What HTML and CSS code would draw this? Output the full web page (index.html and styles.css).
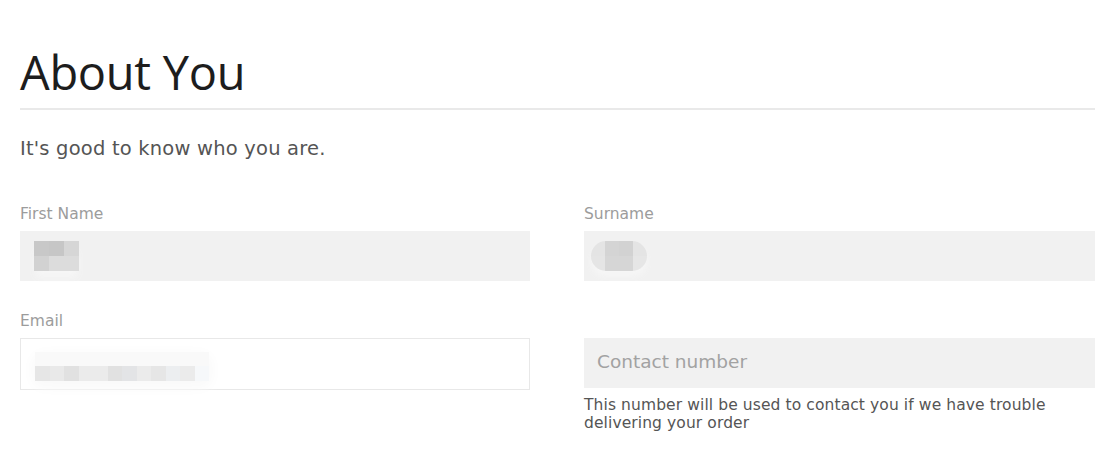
FILE: index.html
```html
<!DOCTYPE html>
<html lang="en">
<head>
<meta charset="utf-8">
<title>About You</title>
<link rel="stylesheet" href="styles.css">
</head>
<body>
<main class="page">
  <h1 class="title">About You</h1>
  <p class="intro">It's good to know who you are.</p>
  <div class="form-grid">
    <div class="field">
      <label class="label">First Name</label>
      <div class="input filled">
        <div class="blur blur-first">
          <span class="px a1"></span><span class="px a2"></span><span class="px a3"></span>
          <span class="px a4"></span><span class="px a5"></span><span class="px a6"></span>
        </div>
      </div>
    </div>
    <div class="field">
      <label class="label">Surname</label>
      <div class="input filled">
        <div class="blur blur-sur">
          <span class="px b1"></span><span class="px b2"></span><span class="px b3"></span><span class="px b4"></span>
          <span class="px b5"></span><span class="px b6"></span><span class="px b7"></span><span class="px b8"></span>
        </div>
      </div>
    </div>
    <div class="field">
      <label class="label">Email</label>
      <div class="input outlined">
        <div class="blur blur-email">
          <span class="px c0"></span><span class="px c0"></span><span class="px c0"></span><span class="px c0"></span><span class="px c0"></span><span class="px c0"></span><span class="px c0"></span><span class="px c0"></span><span class="px c0"></span><span class="px c0"></span><span class="px c0"></span><span class="px c0"></span>
          <span class="px c1"></span><span class="px c2"></span><span class="px c3"></span><span class="px c4"></span><span class="px c4"></span><span class="px c3"></span><span class="px c5"></span><span class="px c4"></span><span class="px c1"></span><span class="px c6"></span><span class="px c4"></span><span class="px c7"></span>
        </div>
      </div>
    </div>
    <div class="field field-contact">
      <div class="input filled placeholder">Contact number</div>
      <p class="help">This number will be used to contact you if we have trouble delivering your order</p>
    </div>
  </div>
</main>
</body>
</html>
```
FILE: styles.css
```css
* { box-sizing: border-box; }
html, body { margin: 0; padding: 0; background: #fff; }
body { font-family: "DejaVu Sans", "Noto Sans", sans-serif; }

.page {
  padding: 0 25px 0 20px;
}

.title {
  margin: 0;
  padding-top: 44px;
  font-family: "Open Sans", "Noto Sans", sans-serif;
  font-weight: 400;
  font-size: 47px;
  line-height: 56px;
  color: #1d1d1d;
  letter-spacing: -0.3px;
  padding-bottom: 8px;
  border-bottom: 2px solid #e9e9e9;
}

.intro {
  margin: 26px 0 0 0;
  font-family: "DejaVu Sans", sans-serif;
  font-size: 19.5px;
  line-height: 26px;
  letter-spacing: 0.2px;
  color: #555;
}

.form-grid {
  margin-top: 43px;
  display: grid;
  grid-template-columns: 510px 511px;
  column-gap: 54px;
  row-gap: 31px;
}

.field { display: flex; flex-direction: column; }

.label {
  font-family: "DejaVu Sans", sans-serif;
  font-size: 15.5px;
  line-height: 18px;
  color: #9c9c9c;
  margin-bottom: 8px;
}

.input {
  height: 50px;
  position: relative;
  display: flex;
  align-items: center;
}
.filled { background: #f1f1f1; }
.outlined { background: #fff; border: 1px solid #e8e8e8; height: 52px; }

.field-contact { padding-top: 26px; }
.placeholder {
  padding-left: 13px;
  padding-bottom: 3px;
  font-family: "DejaVu Sans", sans-serif;
  font-size: 18.5px;
  color: #a2a2a2;
}
.help {
  margin: 8px 0 0 0;
  font-family: "DejaVu Sans", sans-serif;
  font-size: 15.5px;
  line-height: 18px;
  letter-spacing: 0.1px;
  color: #555;
}

/* pixelated blurred values */
.blur { display: grid; }
.blur-first {
  margin-left: 14px;
  grid-template-columns: repeat(3, 15px);
  grid-template-rows: 15px 15px;
  box-shadow: 0 8px 8px -2px #f7f7f7;
  border-radius: 0 3px 0 0;
}
.blur-sur {
  margin-left: 7px;
  grid-template-columns: repeat(4, 14px);
  grid-template-rows: 15px 15px;
  border-radius: 15px;
  overflow: hidden;
  box-shadow: 0 6px 6px 0 #f6f6f6;
}
.blur-email {
  margin-left: 14px;
  margin-top: 4px;
  grid-template-columns: repeat(12, 14.5px);
  grid-template-rows: 14px 15px;
  box-shadow: 0 4px 12px 4px #fafafa;
  border-radius: 10px;
}
.a1 { background: #c8c8c8; } .a2 { background: #c6c6c6; } .a3 { background: #d6d6d6; }
.a4 { background: #d2d2d2; } .a5 { background: #dcdcdc; } .a6 { background: #dcdcdc; }
.b1 { background: #e4e4e4; } .b2 { background: #d4d4d4; } .b3 { background: #d2d2d2; } .b4 { background: #e4e4e4; }
.b5 { background: #e5e5e5; } .b6 { background: #d6d6d6; } .b7 { background: #d6d6d6; } .b8 { background: #e6e6e6; }
.c0 { background: #f9f9f9; }
.c1 { background: #e6e6e6; } .c2 { background: #e9e9e9; } .c3 { background: #e1e1e1; }
.c4 { background: #ebebeb; } .c5 { background: #e3e4e6; } .c6 { background: #eceef0; } .c7 { background: #f6f8fa; }
```
